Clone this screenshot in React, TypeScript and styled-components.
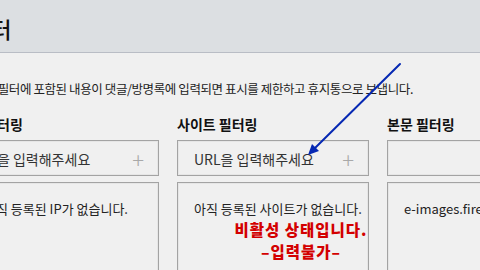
import React from "react";
import styled, { createGlobalStyle } from "styled-components";

const Global = createGlobalStyle`
  html, body { margin: 0; padding: 0; background: #f0f0f0; }
  body { font-family: "Noto Sans CJK KR", "Noto Sans", sans-serif; color: #222; }
`;

const Viewport = styled.div`
  position: relative;
  width: 480px;
  height: 270px;
  overflow: hidden;
  background: #f0f0f0;
`;

const Header = styled.header`
  height: 53px;
  background: #dcdfe2;
  border-bottom: 1px solid #b9bdc5;
  display: flex;
  align-items: center;
  margin-left: -29px;
  padding-top: 4px;
  box-sizing: border-box;
`;

const Title = styled.h1`
  margin: 0;
  font-size: 22px;
  font-weight: 500;
  color: #111;
  white-space: nowrap;
`;

const Content = styled.main`
  margin-left: -33px;
  padding-top: 26px;
  display: flex;
  flex-direction: column;
`;

const Desc = styled.p`
  margin: 0 0 0 -5px;
  font-size: 12.5px;
  letter-spacing: -0.4px;
  line-height: 20px;
  white-space: nowrap;
  color: #222;
`;

const Columns = styled.div`
  display: grid;
  grid-template-columns: repeat(3, 192px);
  column-gap: 18px;
  margin-top: 16px;
`;

const Column = styled.section`
  display: flex;
  flex-direction: column;
`;

const ColTitle = styled.h2`
  margin: 0 0 7px;
  font-size: 14px;
  font-weight: 700;
  line-height: 18px;
  white-space: nowrap;
  color: #111;
`;

const InputBox = styled.div`
  height: 36px;
  box-sizing: border-box;
  border: 1px solid #a3a3a3;
  box-shadow: inset 0 0 0 1px #e6e6e6;
  display: flex;
  align-items: center;
  justify-content: space-between;
  padding: 1px 14px 0 16px;
  font-size: 14px;
  color: #333;
  white-space: nowrap;
`;

const Plus = styled.span`
  font-size: 22px;
  font-weight: 200;
  color: #a8a8a8;
  line-height: 1;
`;

const ListBox = styled.div`
  margin-top: 6px;
  height: 120px;
  box-sizing: border-box;
  border: 1px solid #a3a3a3;
  box-shadow: inset 0 0 0 1px #e6e6e6;
  padding: 16px 16px;
  font-size: 13px;
  line-height: 20px;
  color: #222;
  white-space: nowrap;
`;

const Arrow = styled.svg`
  position: absolute;
  left: 0;
  top: 0;
  pointer-events: none;
`;

const Stamp = styled.div`
  position: absolute;
  left: 226px;
  top: 218px;
  width: 150px;
  display: flex;
  flex-direction: column;
  align-items: center;
  color: #d30000;
  font-weight: 900;
  font-size: 15.5px;
  line-height: 22px;
  letter-spacing: 1px;
  white-space: nowrap;
`;

const columns = [
  { title: "IP 필터링", placeholder: "IP을 입력해주세요", empty: "아직 등록된 IP가 없습니다." },
  { title: "사이트 필터링", placeholder: "URL을 입력해주세요", empty: "아직 등록된 사이트가 없습니다." },
  { title: "본문 필터링", placeholder: "", empty: "e-images.firebaseapp.com" },
];

export default function App() {
  return (
    <Viewport>
      <Global />
      <Header>
        <Title>필터</Title>
      </Header>
      <Content>
        <Desc>등록된 필터에 포함된 내용이 댓글/방명록에 입력되면 표시를 제한하고 휴지통으로 보냅니다.</Desc>
        <Columns>
          {columns.map((c) => (
            <Column key={c.title}>
              <ColTitle>{c.title}</ColTitle>
              <InputBox>
                <span>{c.placeholder}</span>
                <Plus>+</Plus>
              </InputBox>
              <ListBox>{c.empty}</ListBox>
            </Column>
          ))}
        </Columns>
      </Content>
      <Arrow width="480" height="270" viewBox="0 0 480 270">
        <line x1="400" y1="64" x2="314" y2="149" stroke="#0628b3" strokeWidth="2" strokeLinecap="round" />
        <polygon points="308,155 312,144 319,151" fill="#0628b3" />
      </Arrow>
      <Stamp>
        <span>비활성 상태입니다.</span>
        <span>–입력불가–</span>
      </Stamp>
    </Viewport>
  );
}
